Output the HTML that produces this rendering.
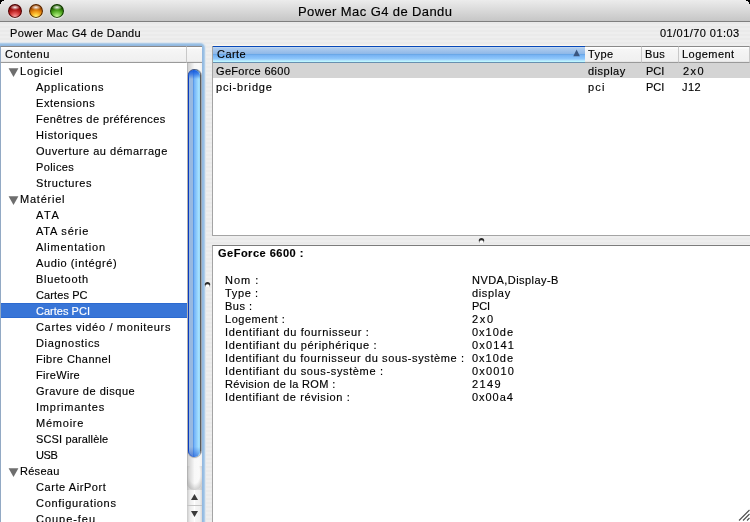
<!DOCTYPE html>
<html><head><meta charset="utf-8">
<style>
*{margin:0;padding:0;box-sizing:border-box}
html,body{width:750px;height:522px;overflow:hidden}
body{position:relative;will-change:transform;-webkit-text-stroke-width:0.15px;font-family:"Liberation Sans",sans-serif;font-size:11px;color:#000;
 background:repeating-linear-gradient(to bottom,#eeeeee 0,#eeeeee 2px,#eaeaea 2px,#eaeaea 4px);}
.a{position:absolute}
.t{position:absolute;white-space:nowrap;line-height:14px;height:14px}
#title{left:0;top:0;width:750px;height:22px;background:linear-gradient(#ececec,#c6c6c6);border-bottom:1px solid #7f7f7f}
.btn{position:absolute;top:4px;width:14px;height:14px;border-radius:50%}
.sb .t{letter-spacing:0.5px}
.hd{position:absolute;top:46px;height:17px;border-top:1px solid #8a8a8a;border-bottom:1px solid #9a9a9a;
 background:linear-gradient(#fff 0,#fff 1px,#f6f6f6 2px,#f2f2f2 60%,#f0f0f0 92%,#e0e0e0 100%)}
.det .t{letter-spacing:0.5px;line-height:13px;height:13px}
</style></head><body>
<div id="title" class="a"></div>
<div class="btn" style="left:8px;box-shadow:inset 0 0 0 1px rgba(50,0,0,.85),0 1px 1px rgba(255,255,255,.7);background:radial-gradient(ellipse 5px 2.6px at 50% 24%,rgba(255,255,255,.95),rgba(255,255,255,0)),radial-gradient(circle 11px at 50% 95%,#fcb0b0 0,#e86060 30%,#c02424 60%,#8a0a0a 90%)"></div>
<div class="btn" style="left:29px;box-shadow:inset 0 0 0 1px rgba(60,25,0,.85),0 1px 1px rgba(255,255,255,.7);background:radial-gradient(ellipse 5px 2.6px at 50% 24%,rgba(255,255,255,.95),rgba(255,255,255,0)),radial-gradient(circle 11px at 50% 95%,#ffff90 0,#ffc838 30%,#e88a10 60%,#a04800 90%)"></div>
<div class="btn" style="left:50px;box-shadow:inset 0 0 0 1px rgba(10,40,0,.85),0 1px 1px rgba(255,255,255,.7);background:radial-gradient(ellipse 5px 2.6px at 50% 24%,rgba(255,255,255,.95),rgba(255,255,255,0)),radial-gradient(circle 11px at 50% 95%,#d8ffa8 0,#90d860 30%,#50a820 60%,#206000 90%)"></div>
<svg class="a" style="left:0;top:0" width="5" height="5"><path d="M0 0H4V1H2V2H1V4H0Z" fill="#000"/></svg>
<svg class="a" style="left:745px;top:0" width="5" height="5"><path d="M5 0H1V1H3V2H4V4H5Z" fill="#000"/></svg>
<div class="t" style="left:298px;top:5px;font-size:13px;letter-spacing:0.4px">Power Mac G4 de Dandu</div>
<div class="t" style="left:10px;top:26px;letter-spacing:0.36px">Power Mac G4 de Dandu</div>
<div class="t" style="left:660px;top:26px;letter-spacing:0.44px">01/01/70 01:03</div>

<!-- left pane -->
<div class="a" style="left:-1px;top:46px;width:203px;height:480px;border-radius:2px;box-shadow:0 0 0 1px #94b8e0,0 0 0 2px #98c0e4,0 0 0 3px #b0cce8,0 0 0 4px #dde6ee"></div>
<div class="a" style="left:0;top:46px;width:202px;height:480px;background:#fff;border-top:1px solid #8a8a8a;border-left:1px solid #92a9c4"></div>
<div class="hd" style="left:0;width:187px;border-right:1px solid #c8c8c8;border-left:1px solid #92a9c4"></div>
<div class="hd" style="left:187px;width:15px"></div>
<div class="t" style="left:5px;top:47px;letter-spacing:0.45px">Contenu</div>

<!-- scrollbar -->
<div class="a" style="left:187px;top:470px;width:15px;height:52px;background:linear-gradient(90deg,#b8b8b8 0,#d4d4d4 15%,#e6e6e6 50%,#d8d8d8 85%,#c8c8c8 100%)"></div>
<div class="a" style="left:187px;top:63px;width:15px;height:427px;border-radius:0 0 7px 7px;background:linear-gradient(90deg,#b8b8b8 0,#b8b8b8 1px,#d0d0d0 1px,#dcdcdc 20%,#eeeeee 40%,#f8f8f8 50%,#fafafa 80%,#f2f0ee 100%)"></div>
<div class="a" style="left:187px;top:466px;width:15px;height:24px;border-radius:0 0 7px 7px;background:radial-gradient(ellipse 60% 70% at 50% 30%,rgba(255,255,255,0) 60%,rgba(160,160,160,.45) 100%)"></div>
<div class="a" style="left:188px;top:69px;width:13px;height:388px;border-radius:6.5px;background:linear-gradient(90deg,#0838c0 0,#0838c0 1px,#98b8e0 1px,#98b8e0 5px,#5a9ae8 5px,#5a9ae8 6px,#70b0f8 6px,#a8e4ff 11px,#90d0f8 12px,#5a5a5a 12px);box-shadow:1px 0 0 #a0a8b0,0 1px 1px rgba(0,0,0,.3),inset 0 1px 0 rgba(70,70,90,.8),inset 1px 0 0 rgba(10,60,190,.5)"></div>
<div class="a" style="left:188px;top:70px;width:12px;height:9px;border-radius:6px 6px 0 0;background:linear-gradient(rgba(16,84,220,.95) 0,rgba(30,100,225,.7) 45%,rgba(30,100,225,0) 100%)"></div>
<div class="a" style="left:188px;top:440px;width:12px;height:17px;border-radius:0 0 6px 6px;background:linear-gradient(rgba(20,80,210,0) 0,rgba(20,80,210,0) 40%,rgba(20,80,210,.55) 100%)"></div>
<div class="a" style="left:187px;top:490px;width:15px;height:32px;background:linear-gradient(90deg,#c8c8c8 0,#ececec 20%,#f8f8f8 45%,#ffffff 50%,#f6f6f6 55%,#f0f0f0 85%,#d8d8d8 100%)"></div>
<div class="a" style="left:187px;top:505px;width:15px;height:1px;background:#c4c4c4"></div>
<svg class="a" style="left:187px;top:490px" width="15" height="32"><path d="M4 10 L7.5 4 L11 10Z" fill="#3a3a3a"/><path d="M4 21 L11 21 L7.5 27Z" fill="#3a3a3a"/></svg>

<div class="sb">
<svg class="a" style="left:8px;top:68px" width="11" height="10"><path d="M0.6 0.2H10.4L5.5 8.9Z" fill="#6e6e6e"/></svg>
<div class="t" style="left:20px;top:64px;letter-spacing:0.77px">Logiciel</div>
<div class="t" style="left:36px;top:80px;letter-spacing:0.75px">Applications</div>
<div class="t" style="left:36px;top:96px;letter-spacing:0.54px">Extensions</div>
<div class="t" style="left:36px;top:112px;letter-spacing:0.43px">Fenêtres de préférences</div>
<div class="t" style="left:36px;top:128px;letter-spacing:0.66px">Historiques</div>
<div class="t" style="left:36px;top:144px;letter-spacing:0.52px">Ouverture au démarrage</div>
<div class="t" style="left:36px;top:160px;letter-spacing:0.40px">Polices</div>
<div class="t" style="left:36px;top:176px;letter-spacing:0.60px">Structures</div>
<svg class="a" style="left:8px;top:196px" width="11" height="10"><path d="M0.6 0.2H10.4L5.5 8.9Z" fill="#6e6e6e"/></svg>
<div class="t" style="left:20px;top:192px;letter-spacing:0.77px">Matériel</div>
<div class="t" style="left:36px;top:208px;letter-spacing:1.50px">ATA</div>
<div class="t" style="left:36px;top:224px;letter-spacing:0.79px">ATA série</div>
<div class="t" style="left:36px;top:240px;letter-spacing:0.77px">Alimentation</div>
<div class="t" style="left:36px;top:256px;letter-spacing:0.61px">Audio (intégré)</div>
<div class="t" style="left:36px;top:272px;letter-spacing:0.71px">Bluetooth</div>
<div class="t" style="left:36px;top:288px;letter-spacing:0.1px">Cartes PC</div>
<div class="a" style="left:1px;top:303px;width:186px;height:15px;background:#3875d7;border-top:1px solid #2c6ad0;border-bottom:1px solid #2c6ad0"></div>
<div class="t" style="left:36px;top:304px;color:#fff;letter-spacing:0.02px">Cartes PCI</div>
<div class="t" style="left:36px;top:320px;letter-spacing:0.66px">Cartes vidéo / moniteurs</div>
<div class="t" style="left:36px;top:336px;letter-spacing:0.67px">Diagnostics</div>
<div class="t" style="left:36px;top:352px;letter-spacing:0.46px">Fibre Channel</div>
<div class="t" style="left:36px;top:368px;letter-spacing:0.31px">FireWire</div>
<div class="t" style="left:36px;top:384px;letter-spacing:0.51px">Gravure de disque</div>
<div class="t" style="left:36px;top:400px;letter-spacing:0.77px">Imprimantes</div>
<div class="t" style="left:36px;top:416px;letter-spacing:0.77px">Mémoire</div>
<div class="t" style="left:36px;top:432px;letter-spacing:0.14px">SCSI parallèle</div>
<div class="t" style="left:36px;top:448px;letter-spacing:-0.45px">USB</div>
<svg class="a" style="left:8px;top:468px" width="11" height="10"><path d="M0.6 0.2H10.4L5.5 8.9Z" fill="#6e6e6e"/></svg>
<div class="t" style="left:20px;top:464px;letter-spacing:0.28px">Réseau</div>
<div class="t" style="left:36px;top:480px;letter-spacing:0.57px">Carte AirPort</div>
<div class="t" style="left:36px;top:496px;letter-spacing:0.69px">Configurations</div>
<div class="t" style="left:36px;top:512px;letter-spacing:0.96px">Coupe-feu</div>
</div>

<!-- splitter dimple vertical -->
<svg class="a" style="left:204px;top:280px" width="7" height="8"><circle cx="3.5" cy="4.6" r="2.7" fill="#2a2a2a"/><ellipse cx="3.5" cy="6" rx="2.2" ry="1.8" fill="#fff"/></svg>

<!-- right table -->
<div class="a" style="left:212px;top:46px;width:540px;height:190px;background:#fff;border:1px solid #a4a4a4;border-top-color:#8a8a8a"></div>
<div class="a" style="left:213px;top:46px;width:372px;height:17px;border-top:1px solid #0848b8;border-bottom:1px solid #6890b0;background:linear-gradient(#d0e0f4 0,#b0cdee 6%,#8fb8e8 45%,#6aa8e8 50%,#78b4f4 56%,#90c8fc 80%,#b0e0ff 88%,#c0ffff 100%)"></div>
<div class="a" style="left:212px;top:45px;width:373px;height:1px;background:#fdf8ee"></div>
<div class="hd" style="left:585px;width:57px;border-right:1px solid #c8c8c8"></div>
<div class="hd" style="left:642px;width:37px;border-right:1px solid #c8c8c8"></div>
<div class="hd" style="left:679px;width:71px;border-right:1px solid #c8c8c8"></div>
<div class="t" style="left:217px;top:47px;letter-spacing:0.45px">Carte</div>
<svg class="a" style="left:572px;top:49px" width="9" height="8"><path d="M1.3 7.3H7.9L4.6 0.6Z" fill="#3a5680"/></svg>
<div class="t" style="left:588px;top:47px;letter-spacing:0.45px">Type</div>
<div class="t" style="left:645px;top:47px;letter-spacing:0.45px">Bus</div>
<div class="t" style="left:682px;top:47px;letter-spacing:0.45px">Logement</div>
<div class="a" style="left:213px;top:63px;width:537px;height:15px;background:#d4d4d4"></div>
<div class="sb">
<div class="t" style="left:216px;top:64px;letter-spacing:0.32px">GeForce 6600</div>
<div class="t" style="left:588px;top:64px">display</div>
<div class="t" style="left:646px;top:64px;letter-spacing:0px">PCI</div>
<div class="t" style="left:683px;top:64px;letter-spacing:1.5px">2x0</div>
<div class="t" style="left:216px;top:80px;letter-spacing:0.85px">pci-bridge</div>
<div class="t" style="left:588px;top:80px;letter-spacing:1.2px">pci</div>
<div class="t" style="left:646px;top:80px;letter-spacing:0px">PCI</div>
<div class="t" style="left:682px;top:80px">J12</div>
</div>

<!-- splitter dimple horizontal -->
<svg class="a" style="left:478px;top:236px" width="7" height="8"><circle cx="3.5" cy="4.6" r="2.7" fill="#2a2a2a"/><ellipse cx="3.5" cy="6" rx="2.2" ry="1.8" fill="#fff"/></svg>

<!-- details -->
<div class="a" style="left:212px;top:245px;width:540px;height:290px;background:#fff;border:1px solid #a4a4a4;border-top-color:#7c7c7c"></div>
<div class="t" style="left:218px;top:246px;font-weight:bold;letter-spacing:0.5px">GeForce 6600 :</div>
<div class="det">
<div class="t" style="left:225px;top:274px;letter-spacing:1.00px">Nom :</div>
<div class="t" style="left:225px;top:287px;letter-spacing:0.64px">Type :</div>
<div class="t" style="left:225px;top:300px;letter-spacing:0.50px">Bus :</div>
<div class="t" style="left:225px;top:313px;letter-spacing:0.53px">Logement :</div>
<div class="t" style="left:225px;top:326px;letter-spacing:0.64px">Identifiant du fournisseur :</div>
<div class="t" style="left:225px;top:339px;letter-spacing:0.65px">Identifiant du périphérique :</div>
<div class="t" style="left:225px;top:352px;letter-spacing:0.61px">Identifiant du fournisseur du sous-système :</div>
<div class="t" style="left:225px;top:365px;letter-spacing:0.64px">Identifiant du sous-système :</div>
<div class="t" style="left:225px;top:378px;letter-spacing:0.33px">Révision de la ROM :</div>
<div class="t" style="left:225px;top:391px;letter-spacing:0.61px">Identifiant de révision :</div>
<div class="t" style="left:472px;top:274px;letter-spacing:0.44px">NVDA,Display-B</div>
<div class="t" style="left:472px;top:287px;letter-spacing:0.65px">display</div>
<div class="t" style="left:472px;top:300px;letter-spacing:-0.15px">PCI</div>
<div class="t" style="left:472px;top:313px;letter-spacing:1.70px">2x0</div>
<div class="t" style="left:472px;top:326px;letter-spacing:1.00px">0x10de</div>
<div class="t" style="left:472px;top:339px;letter-spacing:1.16px">0x0141</div>
<div class="t" style="left:472px;top:352px;letter-spacing:1.00px">0x10de</div>
<div class="t" style="left:472px;top:365px;letter-spacing:1.16px">0x0010</div>
<div class="t" style="left:472px;top:378px;letter-spacing:1.37px">2149</div>
<div class="t" style="left:472px;top:391px;letter-spacing:0.96px">0x00a4</div>
</div>

<!-- resize grip -->
<svg class="a" style="left:735px;top:506px" width="15" height="16"><path d="M4 14.5L14.5 4M8 14.5L14.5 8M12 14.5L14.5 12" stroke="#505050" stroke-width="1.1"/></svg>
</body></html>
